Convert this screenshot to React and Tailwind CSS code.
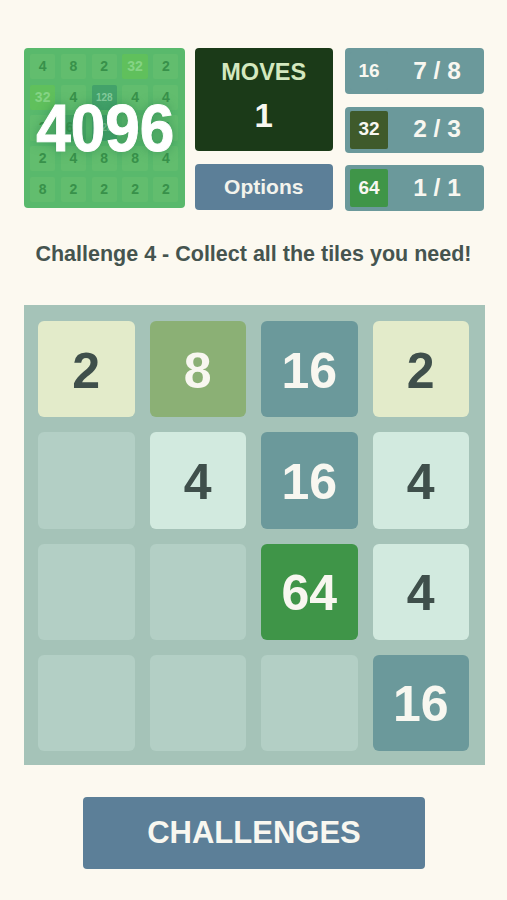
const font = { fontFamily: '"Liberation Sans", Arial, sans-serif' };

const miniTiles = [
  ["4", "8", "2", "32", "2"],
  ["32", "4", "128", "4", "4"],
  ["2", "64", "128", "2", "4"],
  ["2", "4", "8", "8", "4"],
  ["8", "2", "2", "2", "2"],
];

const board = [2, 8, 16, 2, 0, 4, 16, 4, 0, 0, 64, 4, 0, 0, 0, 16];

const tileClass = {
  0: "bg-[#b3cfc5]",
  2: "bg-[#e3ebca] text-[#3f4f4b]",
  4: "bg-[#d2eadf] text-[#3f4f4b]",
  8: "bg-[#8bb075] text-[#f8f7f0]",
  16: "bg-[#6b999b] text-[#f8f7f0]",
  64: "bg-[#3f9548] text-[#f8f7f0]",
};

const MiniTile = ({ value }) => {
  let color = "bg-[#62bd6e] text-[#38914a]";
  if (value === "32") color = "bg-[#60c05c] text-[#85d485]";
  if (value === "64") color = "bg-[#4aa865] text-[#38914a]";
  if (value === "128") color = "bg-[#43a26a] text-[#84cb9c]";
  return (
    <div className={`flex items-center justify-center rounded-[2px] font-bold ${value === "128" ? "text-[10px]" : "text-[14px]"} ${color}`}>
      {value}
    </div>
  );
};

const Goal = ({ value, count, tile }) => (
  <div className="flex h-[46px] items-center rounded-[4px] bg-[#6b999b] pl-[5px]">
    <div className={`flex h-[38px] w-[38px] items-center justify-center rounded-[2px] text-[19px] font-bold text-[#f8f7f0] ${tile}`}>
      {value}
    </div>
    <div className="ml-[19px] w-[60px] text-center text-[24.5px] font-bold text-[#f8f7f0]">{count}</div>
  </div>
);

const App = () => {
  return (
    <div className="h-[900px] w-[507px] overflow-hidden bg-[#fcf9f0]" style={font}>
      <div className="flex pl-6 pt-12">
        <div className="relative h-[160px] w-[160.5px] rounded-[4px] bg-[#59b96c] p-[6px]">
          <div className="grid h-full grid-cols-5 grid-rows-5 gap-[5.5px]">
            {miniTiles.flat().map((value, i) => (
              <MiniTile key={i} value={value} />
            ))}
          </div>
          <div className="absolute inset-0 flex scale-x-[0.94] items-center justify-center pl-[2px] text-[66px] font-bold text-white [-webkit-text-stroke:1px_white] [text-shadow:0_0_12px_rgba(40,130,80,0.7)]">
            4096
          </div>
        </div>

        <div className="ml-[10px] flex w-[138.5px] flex-col">
          <div className="flex h-[103px] flex-col items-center rounded-[4px] bg-[#1b3a18] pt-[11px]">
            <div className="text-[23.5px] leading-[26px] font-bold text-[#d4e8bf]">MOVES</div>
            <div className="mt-[13px] text-[33px] leading-[36px] font-bold text-[#f8f7f0]">1</div>
          </div>
          <div className="mt-[13px] flex h-[46px] items-center justify-center rounded-[4px] bg-[#5c7f98] text-[21px] font-bold text-[#f3f3ec]">
            Options
          </div>
        </div>

        <div className="ml-[12px] flex w-[139px] flex-col gap-[12.5px]">
          <Goal value="16" count="7 / 8" tile="bg-[#6b999b]" />
          <Goal value="32" count="2 / 3" tile="bg-[#3f5a2b]" />
          <Goal value="64" count="1 / 1" tile="bg-[#3f9548]" />
        </div>
      </div>

      <div className="mt-[30px] text-center text-[21.5px] leading-[26px] font-bold text-[#45544f]">
        Challenge 4 - Collect all the tiles you need!
      </div>

      <div className="mx-6 mt-[38px] grid h-[460px] w-[461px] grid-cols-4 grid-rows-4 gap-[15px] bg-[#a5c3b8] pb-[14px] pl-[14px] pr-[16px] pt-[16px]">
        {board.map((value, i) => (
          <div
            key={i}
            className={`flex items-center justify-center rounded-[6px] pt-[4px] text-[50px] font-bold ${tileClass[value]}`}
          >
            {value !== 0 && value}
          </div>
        ))}
      </div>

      <div className="ml-[83px] mt-[32px] flex h-[71.5px] w-[342px] items-center justify-center rounded-[4px] bg-[#5c7f98] text-[31px] font-bold text-[#f8f7f0]">
        CHALLENGES
      </div>
    </div>
  );
};

export default App;
